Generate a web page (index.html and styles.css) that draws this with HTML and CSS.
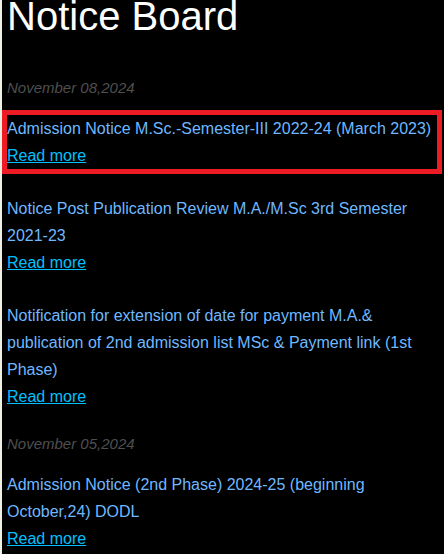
FILE: index.html
```html
<!DOCTYPE html>
<html>
<head>
<meta charset="utf-8">
<link rel="stylesheet" href="styles.css">
</head>
<body>
<div class="board">
  <h1 class="board-title">Notice Board</h1>
  <section class="group">
    <div class="date">November 08,2024</div>
    <div class="item item-focus">
      <div class="item-title">Admission Notice M.Sc.-Semester-III 2022-24 (March 2023)</div>
      <a class="read-more" href="#">Read more</a>
    </div>
    <div class="item">
      <div class="item-title">Notice Post Publication Review M.A./M.Sc 3rd Semester 2021-23</div>
      <a class="read-more" href="#">Read more</a>
    </div>
    <div class="item">
      <div class="item-title">Notification for extension of date for payment M.A.&amp; publication of 2nd admission list MSc &amp; Payment link (1st Phase)</div>
      <a class="read-more" href="#">Read more</a>
    </div>
  </section>
  <section class="group">
    <div class="date">November 05,2024</div>
    <div class="item">
      <div class="item-title">Admission Notice (2nd Phase) 2024-25 (beginning October,24) DODL</div>
      <a class="read-more" href="#">Read more</a>
    </div>
  </section>
</div>
</body>
</html>
```
FILE: styles.css
```css
html, body {
  margin: 0;
  padding: 0;
  background: #000;
}
body {
  font-family: Arial, "Liberation Sans", sans-serif;
  height: 554px;
  overflow: hidden;
}
.board {
  border-left: 2px solid #eef0e4;
  padding: 0 7px 0 5px;
  min-height: 600px;
  background: #000;
}
.board-title {
  margin: -7px 0 0 0;
  font-size: 40px;
  font-weight: normal;
  line-height: 46px;
  color: #fff;
}
.group {
  display: flex;
  flex-direction: column;
}
.group:first-of-type {
  margin-top: 35px;
}
.date {
  font-size: 15px;
  font-style: italic;
  line-height: 27px;
  color: #4f4f4f;
  margin-bottom: 14px;
}
.group + .group .date {
  margin-top: -6px;
}
.item {
  font-size: 16px;
  line-height: 27px;
  margin-bottom: 26px;
}
.item-title {
  color: #6fb8ff;
}
.read-more {
  color: #00c0ff;
  text-decoration: underline;
}
.item-focus {
  outline: 5px solid #ed1c24;
}
```
